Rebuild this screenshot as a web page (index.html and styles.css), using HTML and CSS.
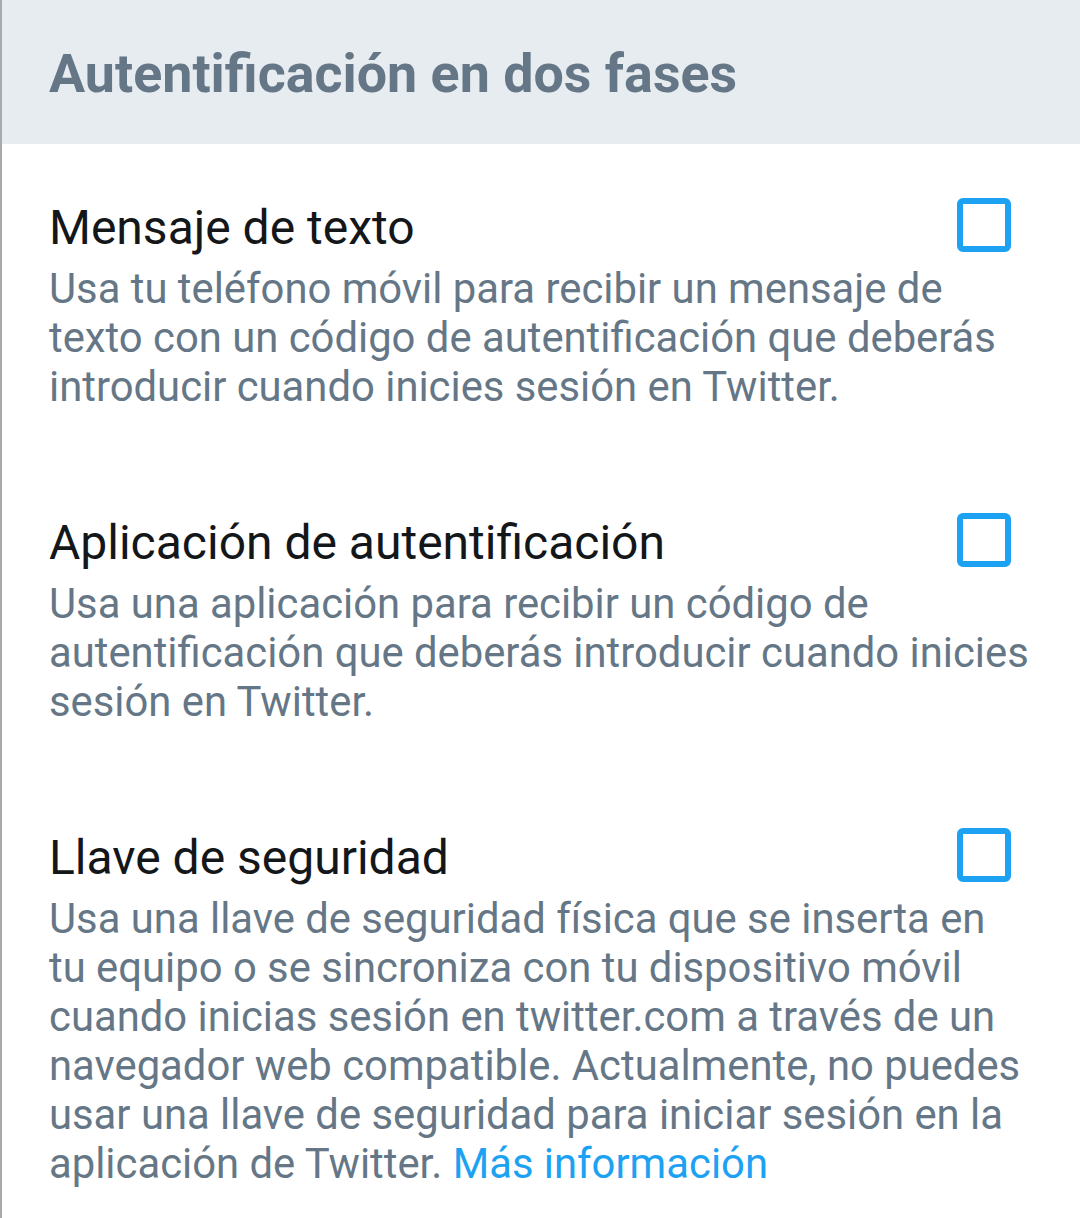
FILE: index.html
```html
<!DOCTYPE html>
<html lang="es">
<head>
<meta charset="utf-8">
<title>Autentificación en dos fases</title>
<link rel="stylesheet" href="styles.css">
</head>
<body>
<div class="page">
  <header class="header">
    <h1 class="header-title">Autentificación en dos fases</h1>
  </header>
  <section class="option">
    <div class="option-row">
      <h2 class="option-title">Mensaje de texto</h2>
      <span class="checkbox"></span>
    </div>
    <p class="option-desc">Usa tu teléfono móvil para recibir un mensaje de texto con un código de autentificación que deberás introducir cuando inicies sesión en Twitter.</p>
  </section>
  <section class="option">
    <div class="option-row">
      <h2 class="option-title">Aplicación de autentificación</h2>
      <span class="checkbox"></span>
    </div>
    <p class="option-desc">Usa una aplicación para recibir un código de autentificación que deberás introducir cuando inicies sesión en Twitter.</p>
  </section>
  <section class="option">
    <div class="option-row">
      <h2 class="option-title">Llave de seguridad</h2>
      <span class="checkbox"></span>
    </div>
    <p class="option-desc">Usa una llave de seguridad física que se inserta en tu equipo o se sincroniza con tu dispositivo móvil cuando inicias sesión en twitter.com a través de un navegador web compatible. Actualmente, no puedes usar una llave de seguridad para iniciar sesión en la aplicación de Twitter. <a class="link" href="#">Más información</a></p>
  </section>
</div>
</body>
</html>
```

FILE: styles.css
```css
html, body {
  margin: 0;
  padding: 0;
  background: #ffffff;
}

body {
  font-family: Roboto, "Noto Sans", "Liberation Sans", sans-serif;
}

.page {
  min-height: 1218px;
  border-left: 2px solid #a9a9a9;
  box-sizing: border-box;
}

.header {
  background: #e6ecf0;
  height: 144px;
  display: flex;
  align-items: center;
  padding: 4px 0 0 47px;
  box-sizing: border-box;
}

.header-title {
  margin: 0;
  font-size: 53.8px;
  font-weight: 700;
  color: #657786;
  line-height: 64px;
}

.option {
  padding: 56px 50px 48px 47px;
}

.option-row {
  display: flex;
  justify-content: space-between;
  align-items: flex-start;
}

.option-title {
  margin: 0;
  font-size: 48px;
  font-weight: 400;
  line-height: 56px;
  color: #14171a;
}

.checkbox {
  flex: none;
  width: 54px;
  height: 54px;
  box-sizing: border-box;
  border: 6px solid #1da1f2;
  border-radius: 6px;
  margin: -2px 19px 0 0;
}

.option-desc {
  margin: 8px 0 0;
  font-size: 41.8px;
  line-height: 49px;
  color: #657786;
}

.link {
  color: #1da1f2;
  text-decoration: none;
}
```
